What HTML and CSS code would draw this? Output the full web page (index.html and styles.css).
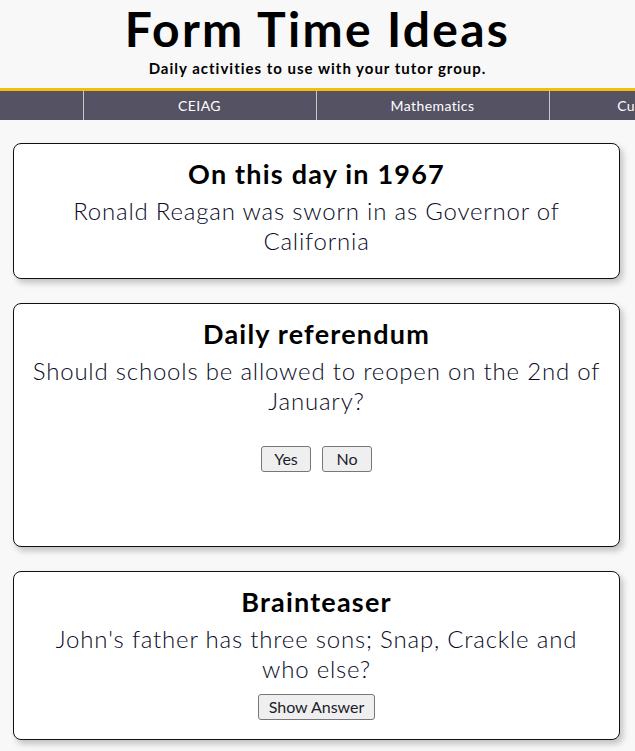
FILE: index.html
```html
<!DOCTYPE html>
<html lang="en">
<head>
<meta charset="utf-8">
<title>Form Time Ideas</title>
<link rel="stylesheet" href="styles.css">
</head>
<body>
<header class="site-header">
  <h1 class="site-title">Form Time Ideas</h1>
  <p class="site-tagline">Daily activities to use with your tutor group.</p>
</header>
<nav class="main-nav">
  <a class="nav-item" href="#">Literacy</a>
  <a class="nav-item" href="#">CEIAG</a>
  <a class="nav-item" href="#">Mathematics</a>
  <a class="nav-item" href="#">Current Affairs</a>
</nav>
<main class="cards">
  <section class="card">
    <h2 class="card-title">On this day in 1967</h2>
    <p class="card-text">Ronald Reagan was sworn in as Governor of California</p>
  </section>
  <section class="card">
    <h2 class="card-title">Daily referendum</h2>
    <p class="card-text">Should schools be allowed to reopen on the 2nd of January?</p>
    <div class="vote-buttons">
      <button class="btn">Yes</button>
      <button class="btn">No</button>
    </div>
    <div class="vote-results"></div>
  </section>
  <section class="card card--compact">
    <h2 class="card-title">Brainteaser</h2>
    <p class="card-text">John's father has three sons; Snap, Crackle and who&nbsp;else?</p>
    <div class="answer-row">
      <button class="btn">Show Answer</button>
    </div>
  </section>
</main>
</body>
</html>
```
FILE: styles.css
```css
html, body {
  margin: 0;
  padding: 0;
}
body {
  background: #f8f8f8;
  font-family: "Lato", "Open Sans", sans-serif;
  color: #000;
  overflow-x: hidden;
}
.site-header {
  text-align: center;
  padding-top: 2px;
  box-sizing: border-box;
  border-bottom: 3px solid #f2c00c;
  height: 91px;
}
.site-title {
  margin: 0;
  font-size: 48px;
  line-height: 54px;
  font-weight: 700;
  letter-spacing: 2.3px;
}
.site-tagline {
  margin: 3px 0 0;
  font-size: 15px;
  font-weight: 700;
  line-height: 18px;
  letter-spacing: 1px;
}
.main-nav {
  display: flex;
  justify-content: center;
  background: #555263;
  height: 29px;
  overflow: hidden;
  padding-right: 4px;
}
.nav-item {
  flex: 0 0 233px;
  border-left: 1px solid #c9c9c9;
  box-sizing: border-box;
  color: #fff;
  text-decoration: none;
  font-size: 14px;
  line-height: 29px;
  letter-spacing: 0.4px;
  text-align: center;
}
.cards {
  display: flex;
  flex-direction: column;
  gap: 24px;
  padding: 23px 15px 20px 13px;
}
.card {
  background: #fff;
  border: 1px solid #111;
  border-radius: 8px;
  box-shadow: 3px 4px 6px rgba(0, 0, 0, 0.22);
  padding: 13px 14px 22px;
  text-align: center;
}
.card--compact {
  padding-bottom: 19px;
}
.card-title {
  margin: 0;
  font-size: 27px;
  line-height: 34px;
  font-weight: 700;
  letter-spacing: 1.2px;
}
.card-text {
  margin: 5px 0 0;
  font-size: 24px;
  line-height: 30px;
  font-weight: 300;
  letter-spacing: 0.8px;
  color: #0a0a26;
}
.vote-buttons {
  display: flex;
  justify-content: center;
  gap: 11px;
  margin-top: 30px;
}
.vote-results {
  height: 52px;
}
.answer-row {
  display: flex;
  justify-content: center;
  margin-top: 10px;
}
.btn {
  font-family: inherit;
  font-size: 16px;
  color: #1c1c2c;
  background: #efefef;
  border: 1px solid #777;
  border-radius: 3px;
  padding: 2px 10px;
  height: 26px;
  line-height: 20px;
}
.vote-buttons .btn {
  width: 50px;
  padding: 0;
}
```
